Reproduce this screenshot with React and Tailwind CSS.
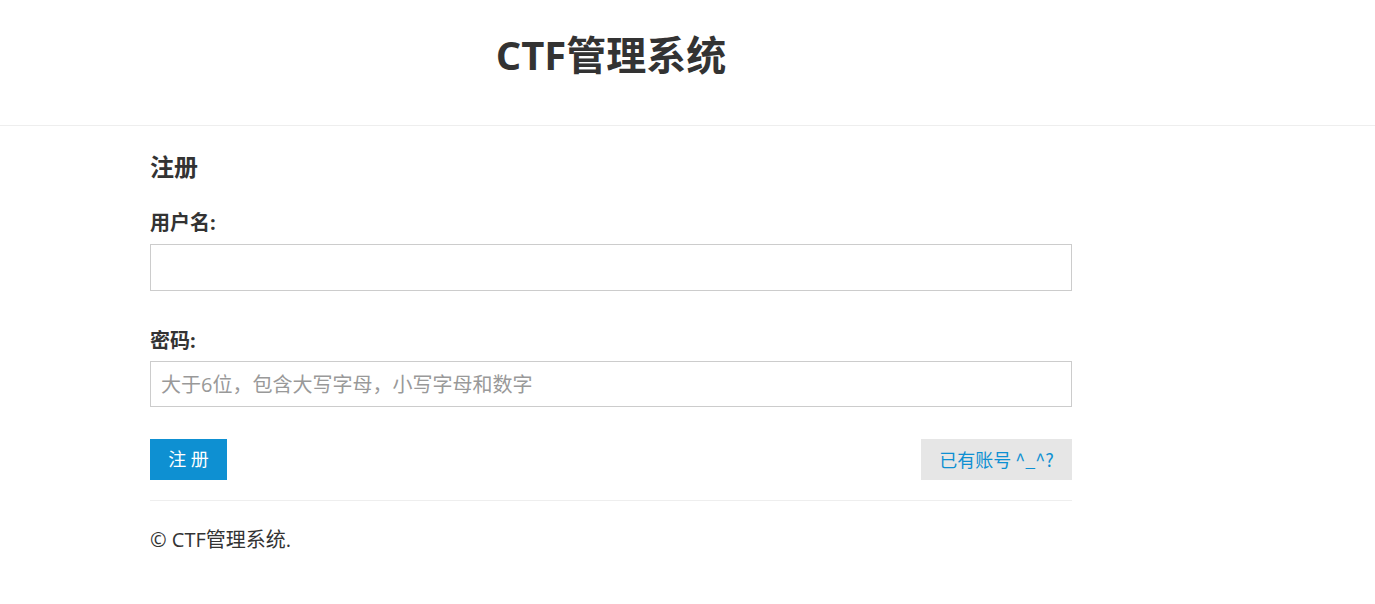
export default function App() {
  return (
    <div className="min-h-[604px] bg-white text-[#333]" style={{ fontFamily: '"Open Sans", "Noto Sans CJK SC", sans-serif' }}>
      <header className="h-[126px] border-b border-[#eee]">
        <div className="ml-[150px] w-[922px] pt-[31px]">
          <h1 className="text-center text-[40px] font-bold leading-[48px] text-[#333]">CTF管理系统</h1>
        </div>
      </header>
      <main className="ml-[150px] w-[922px]">
        <h3 className="mt-[25px] text-[24px] font-bold leading-[32px]">注册</h3>
        <form className="mt-[26px]" onSubmit={(e) => e.preventDefault()}>
          <label className="block text-[20px] font-bold leading-[28px]">用户名:</label>
          <input type="text" className="mt-[7px] block h-[47px] w-full border border-[#ccc] px-[10px] text-[20px] outline-none" />
          <label className="mt-[36px] block text-[20px] font-bold leading-[28px]">密码:</label>
          <input type="password" placeholder="大于6位，包含大写字母，小写字母和数字" className="mt-[6px] block h-[46px] w-full border border-[#ccc] px-[10px] text-[20px] outline-none placeholder:text-[#999]" />
          <div className="mt-[32px] flex items-center justify-between">
            <button type="submit" className="h-[41px] w-[77px] bg-[#0e90d2] text-[18px] text-white">注 册</button>
            <button type="button" className="h-[41px] w-[151px] bg-[#e6e6e6] text-[18px] text-[#0e90d2]" style={{ fontFamily: '"Noto Sans CJK SC", sans-serif' }}>已有账号 ^_^?</button>
          </div>
        </form>
        <hr className="mt-[20px] border-t border-[#eee]" />
        <footer className="mt-[25px] text-[20px] leading-[28px]">© CTF管理系统.</footer>
      </main>
    </div>
  );
}
